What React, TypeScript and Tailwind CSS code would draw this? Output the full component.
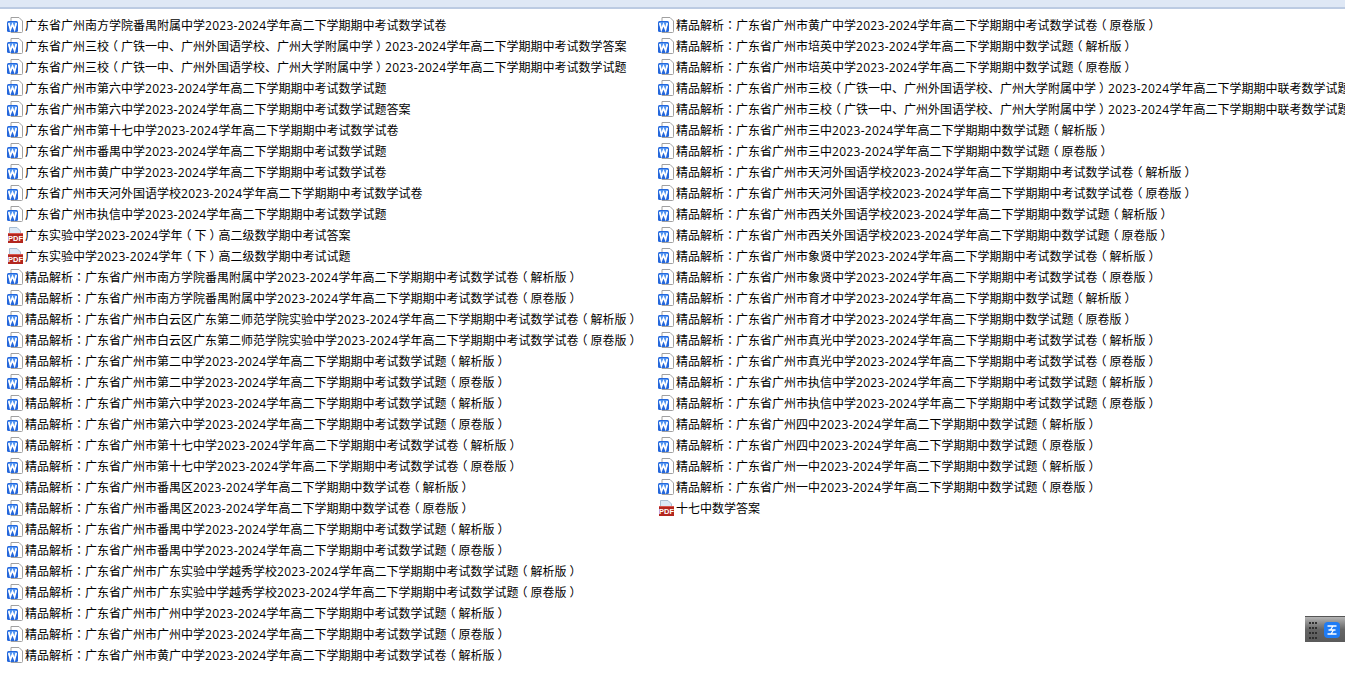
const Y = "2023-2024学年高二下学期期中";
const left: [string, string][] = [
  ["w", `广东省广州南方学院番禺附属中学${Y}考试数学试卷`],
  ["w", `广东省广州三校（广铁一中、广州外国语学校、广州大学附属中学）${Y}考试数学答案`],
  ["w", `广东省广州三校（广铁一中、广州外国语学校、广州大学附属中学）${Y}考试数学试题`],
  ["w", `广东省广州市第六中学${Y}考试数学试题`],
  ["w", `广东省广州市第六中学${Y}考试数学试题答案`],
  ["w", `广东省广州市第十七中学${Y}考试数学试卷`],
  ["w", `广东省广州市番禺中学${Y}考试数学试题`],
  ["w", `广东省广州市黄广中学${Y}考试数学试卷`],
  ["w", `广东省广州市天河外国语学校${Y}考试数学试卷`],
  ["w", `广东省广州市执信中学${Y}考试数学试题`],
  ["p", "广东实验中学2023-2024学年（下）高二级数学期中考试答案"],
  ["p", "广东实验中学2023-2024学年（下）高二级数学期中考试试题"],
  ["w", `精品解析：广东省广州市南方学院番禺附属中学${Y}考试数学试卷（解析版）`],
  ["w", `精品解析：广东省广州市南方学院番禺附属中学${Y}考试数学试卷（原卷版）`],
  ["w", `精品解析：广东省广州市白云区广东第二师范学院实验中学${Y}考试数学试卷（解析版）`],
  ["w", `精品解析：广东省广州市白云区广东第二师范学院实验中学${Y}考试数学试卷（原卷版）`],
  ["w", `精品解析：广东省广州市第二中学${Y}考试数学试题（解析版）`],
  ["w", `精品解析：广东省广州市第二中学${Y}考试数学试题（原卷版）`],
  ["w", `精品解析：广东省广州市第六中学${Y}考试数学试题（解析版）`],
  ["w", `精品解析：广东省广州市第六中学${Y}考试数学试题（原卷版）`],
  ["w", `精品解析：广东省广州市第十七中学${Y}考试数学试卷（解析版）`],
  ["w", `精品解析：广东省广州市第十七中学${Y}考试数学试卷（原卷版）`],
  ["w", `精品解析：广东省广州市番禺区${Y}数学试卷（解析版）`],
  ["w", `精品解析：广东省广州市番禺区${Y}数学试卷（原卷版）`],
  ["w", `精品解析：广东省广州市番禺中学${Y}考试数学试题（解析版）`],
  ["w", `精品解析：广东省广州市番禺中学${Y}考试数学试题（原卷版）`],
  ["w", `精品解析：广东省广州市广东实验中学越秀学校${Y}考试数学试题（解析版）`],
  ["w", `精品解析：广东省广州市广东实验中学越秀学校${Y}考试数学试题（原卷版）`],
  ["w", `精品解析：广东省广州市广州中学${Y}考试数学试题（解析版）`],
  ["w", `精品解析：广东省广州市广州中学${Y}考试数学试题（原卷版）`],
  ["w", `精品解析：广东省广州市黄广中学${Y}考试数学试卷（解析版）`],
];
const right: [string, string][] = [
  ["w", `精品解析：广东省广州市黄广中学${Y}考试数学试卷（原卷版）`],
  ["w", `精品解析：广东省广州市培英中学${Y}数学试题（解析版）`],
  ["w", `精品解析：广东省广州市培英中学${Y}数学试题（原卷版）`],
  ["w", `精品解析：广东省广州市三校（广铁一中、广州外国语学校、广州大学附属中学）${Y}联考数学试题（解析版）`],
  ["w", `精品解析：广东省广州市三校（广铁一中、广州外国语学校、广州大学附属中学）${Y}联考数学试题（原卷版）`],
  ["w", `精品解析：广东省广州市三中${Y}数学试题（解析版）`],
  ["w", `精品解析：广东省广州市三中${Y}数学试题（原卷版）`],
  ["w", `精品解析：广东省广州市天河外国语学校${Y}考试数学试卷（解析版）`],
  ["w", `精品解析：广东省广州市天河外国语学校${Y}考试数学试卷（原卷版）`],
  ["w", `精品解析：广东省广州市西关外国语学校${Y}数学试题（解析版）`],
  ["w", `精品解析：广东省广州市西关外国语学校${Y}数学试题（原卷版）`],
  ["w", `精品解析：广东省广州市象贤中学${Y}考试数学试卷（解析版）`],
  ["w", `精品解析：广东省广州市象贤中学${Y}考试数学试卷（原卷版）`],
  ["w", `精品解析：广东省广州市育才中学${Y}数学试题（解析版）`],
  ["w", `精品解析：广东省广州市育才中学${Y}数学试题（原卷版）`],
  ["w", `精品解析：广东省广州市真光中学${Y}考试数学试卷（解析版）`],
  ["w", `精品解析：广东省广州市真光中学${Y}考试数学试卷（原卷版）`],
  ["w", `精品解析：广东省广州市执信中学${Y}考试数学试题（解析版）`],
  ["w", `精品解析：广东省广州市执信中学${Y}考试数学试题（原卷版）`],
  ["w", `精品解析：广东省广州四中${Y}数学试题（解析版）`],
  ["w", `精品解析：广东省广州四中${Y}数学试题（原卷版）`],
  ["w", `精品解析：广东省广州一中${Y}数学试题（解析版）`],
  ["w", `精品解析：广东省广州一中${Y}数学试题（原卷版）`],
  ["p", "十七中数学答案"],
];

function WordIcon() {
  return (
    <svg width="16" height="16" viewBox="0 0 16 16" className="-mt-[1px] shrink-0">
      <path d="M4 0.5H12L15.5 4V14.5Q15.5 15.5 14.5 15.5H4Z" fill="#fff" stroke="#a0a0a0" />
      <rect x="0" y="4" width="11" height="11" rx="1.5" fill="#2467dc" />
      <rect x="1" y="5" width="9" height="4" rx="1" fill="#4f93f2" />
      <path d="M1.8 6L3.4 12.6L5.5 7.5L7.6 12.6L9.2 6" fill="none" stroke="#fff" strokeWidth="1.7" />
    </svg>
  );
}

function PdfIcon() {
  return (
    <svg width="16" height="16" viewBox="0 0 16 16" className="-mt-[1px] shrink-0">
      <path d="M2.5 0.5H10L13.5 4V7H2.5Z" fill="#dce9f6" stroke="#a9bdd2" />
      <rect x="1" y="6" width="15" height="10" fill="#b3261e" />
      <rect x="1" y="6" width="15" height="1" fill="#d9564d" />
      <text x="8.5" y="14" textAnchor="middle" fontSize="7.5" fontWeight="700" fill="#fff" fontFamily="Liberation Sans, sans-serif">PDF</text>
    </svg>
  );
}

function Label({ text }: { text: string }) {
  const parts = text.split(/(2023-2024|（|）|：)/);
  return (
    <a className="-mt-[2px] ml-[2px] text-black">
      {parts.map((p, i) => {
        if (p === "2023-2024") return <span key={i} className="font-['Open_Sans',sans-serif] tracking-[0.29px]">{p}</span>;
        if (p === "（") return <span key={i} className="inline-block w-[12px] indent-[-3px]">{p}</span>;
        if (p === "）") return <span key={i} className="inline-block w-[12px] indent-[3px]">{p}</span>;
        if (p === "：") return <span key={i} className="font-['Noto_Sans_CJK_JP',sans-serif]">{p}</span>;
        return p;
      })}
    </a>
  );
}

function FileList({ items, className }: { items: [string, string][]; className: string }) {
  return (
    <ul className={className}>
      {items.map(([kind, text], i) => (
        <li key={i} className="flex h-[21px] items-center whitespace-nowrap">
          {kind === "w" ? <WordIcon /> : <PdfIcon />}
          <Label text={text} />
        </li>
      ))}
    </ul>
  );
}

export default function App() {
  return (
    <div className="relative h-[679px] w-[1345px] overflow-hidden bg-white font-['Noto_Sans_CJK_SC',sans-serif] text-[12px] leading-[21px]">
      <div className="h-[9px] border-b-2 border-[#bccbe2] bg-[#dfe8f5]" />
      <div className="flex pt-[6px]">
        <FileList items={left} className="w-[651px] shrink-0 pl-[7px]" />
        <FileList items={right} className="pl-[7px]" />
      </div>
      <div className="absolute left-[1305px] top-[616px] flex h-[26px] w-[40px] items-center gap-[7px] border-t border-[#555] bg-gradient-to-b from-[#b5b5b5] via-[#666] to-[#5a5a5a] pl-[4px]">
        <svg width="8" height="18" viewBox="0 0 8 18" className="shrink-0">
          {[1, 6, 11, 16].map((y) =>
            [0, 3, 6].map((x) => <rect key={`${x}-${y}`} x={x} y={y} width="2" height="2" fill="#2f2f2f" />)
          )}
        </svg>
        <svg width="16" height="16" viewBox="0 0 16 16" className="shrink-0">
          <rect width="16" height="16" rx="4" fill="#1f7cf5" />
          <path d="M3.5 4H12.5M4.5 8H11.5M3.5 12H12.5M9 4L6.5 8H9.5L7 12" fill="none" stroke="#fff" strokeWidth="1.3" />
        </svg>
      </div>
    </div>
  );
}
